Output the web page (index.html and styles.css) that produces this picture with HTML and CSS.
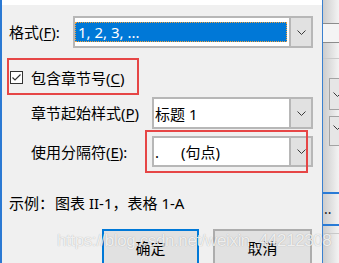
FILE: index.html
```html
<!DOCTYPE html>
<html lang="zh-CN">
<head>
<meta charset="UTF-8">
<title>题注编号</title>
<link rel="stylesheet" href="styles.css">
</head>
<body>
<div class="screen">
    <div class="dialog">
        <div class="topbar"></div>

        <div class="row row-format">
            <label class="lbl lbl-format">格式(<u>F</u>):</label>
            <div class="combo combo-wide">
                <div class="combo-value"><span class="selected">1, 2, 3, ...</span></div>
                <div class="combo-btn"><svg width="9" height="5" viewBox="0 0 9 5"><path d="M0.5 0.5 L4.5 4.5 L8.5 0.5" fill="none" stroke="#3a3a3a" stroke-width="1"/></svg></div>
            </div>
        </div>

        <div class="group">
            <span class="check"><svg width="13" height="13" viewBox="0 0 13 13"><path d="M2.5 6.5 L5 9 L10.5 3.5" fill="none" stroke="#333" stroke-width="1.2"/></svg></span>
            <span>包含章节号(<u>C</u>)</span>
        </div>

        <div class="row row-sub">
            <label class="lbl lbl-sub">章节起始样式(<u>P</u>)</label>
            <div class="combo">
                <div class="combo-value">标题 1</div>
                <div class="combo-btn"><svg width="9" height="5" viewBox="0 0 9 5"><path d="M0.5 0.5 L4.5 4.5 L8.5 0.5" fill="none" stroke="#3a3a3a" stroke-width="1"/></svg></div>
            </div>
        </div>

        <div class="row row-sub row-sep">
            <label class="lbl lbl-sub">使用分隔符(<u>E</u>):</label>
            <div class="combo combo-short">
                <div class="combo-value">.<span class="sep-name">(句点)</span></div>
                <div class="combo-btn"><svg width="9" height="5" viewBox="0 0 9 5"><path d="M0.5 0.5 L4.5 4.5 L8.5 0.5" fill="none" stroke="#3a3a3a" stroke-width="1"/></svg></div>
            </div>
            <div class="mark"></div>
        </div>

        <p class="example">示例：<span class="example-text">图表 II-1，表格 1-A</span></p>

        <div class="buttons">
            <button class="btn btn-ok">确定</button>
            <button class="btn btn-cancel">取消</button>
        </div>
    </div>

    <div class="backdrop">
        <div class="bd" style="height:23px"></div>
        <div class="bd-line"></div>
        <div class="bd-light"></div>
        <div class="bd-line"></div>
        <div class="bd" style="height:15px"></div>
        <div class="bd-line bd-line-soft"></div>
        <div class="bd" style="height:19px"></div>
        <div class="bd-combo"><svg width="9" height="5" viewBox="0 0 9 5"><path d="M0.5 0.5 L4.5 4.5 L8.5 0.5" fill="none" stroke="#3a3a3a" stroke-width="1"/></svg></div>
        <div class="bd" style="height:6px"></div>
        <div class="bd-combo bd-combo-2"><svg width="9" height="5" viewBox="0 0 9 5"><path d="M0.5 0.5 L4.5 4.5 L8.5 0.5" fill="none" stroke="#3a3a3a" stroke-width="1"/></svg></div>
        <div class="bd" style="height:46px"></div>
        <div class="bd-blue"></div>
        <div class="bd-dots">..</div>
        <div class="bd-blue"></div>
        <div class="bd" style="height:7px"></div>
        <div class="bd-line bd-line-soft"></div>
    </div>

    <div class="watermark">https://blog.csdn.net/weixin_44212308</div>
</div>
</body>
</html>
```

FILE: styles.css
```css
* {
    box-sizing: border-box;
}
body {
    margin: 0;
    background-color: #f0f0f0;
    font-family: "Noto Sans", "Noto Sans CJK SC", sans-serif;
    font-size: 15px;
    color: #000;
}
u {
    text-decoration-thickness: 1px;
    text-underline-offset: 2px;
}

.screen {
    position: relative;
    display: flex;
    height: 263px;
    overflow: hidden;
}

/* dialog */
.dialog {
    width: 322px;
    flex: none;
    border-left: 2px solid #2b79d3;
    padding: 0 9px 0 7px;
}
.topbar {
    height: 5px;
    margin: 0 -9px 0 -7px;
    background-color: #fff;
}

.row {
    position: relative;
    display: flex;
    align-items: center;
}
.row-format {
    margin-top: 11px;
}
.row-sub {
    margin-top: 2px;
    padding-left: 22px;
}
.row-sep {
    margin-top: 7px;
}
.lbl {
    flex: none;
    line-height: 20px;
}
.lbl-format {
    width: 64px;
}
.lbl-sub {
    width: 121px;
}

/* combos */
.combo {
    display: flex;
    width: 161px;
    height: 32px;
    border: 2px solid #b7b7b7;
    background-color: #fff;
}
.combo-wide {
    width: 240px;
}
.combo-short {
    height: 31px;
}
.combo-value {
    flex: 1;
    display: flex;
    align-items: center;
    padding-left: 1px;
    white-space: nowrap;
}
.combo-wide .combo-value {
    padding: 4px 2px 4px 0;
}
.selected {
    flex: 1;
    height: 100%;
    display: flex;
    align-items: center;
    padding-left: 3px;
    background-color: #0078d7;
    color: #fff;
    outline: 1px dotted #f3a23a;
    outline-offset: -1px;
}
.sep-name {
    margin-left: 22px;
}
.combo-btn {
    width: 22px;
    flex: none;
    display: flex;
    align-items: center;
    justify-content: center;
    background-color: #e1e1e1;
    border-left: 2px solid #b7b7b7;
}

/* checkbox group */
.group {
    display: flex;
    align-items: center;
    width: 132px;
    height: 37px;
    margin: 10px 0 0 -2px;
    border: 2px solid #e64646;
    padding-left: 1px;
    padding-top: 2px;
}
.check {
    display: flex;
    width: 13px;
    height: 13px;
    margin-right: 8px;
    border: 1px solid #333;
    background-color: #fff;
}
.check svg {
    margin: -1px;
}

.mark {
    position: absolute;
    left: 136px;
    top: -6px;
    width: 163px;
    height: 43px;
    border: 2px solid #e64646;
}

.example {
    margin: 26px 0 0 0;
    line-height: 20px;
    white-space: nowrap;
}
.example-text {
    margin-left: 1px;
}

/* buttons */
.buttons {
    display: flex;
    gap: 14px;
    margin-top: 16px;
    padding-left: 93px;
}
.btn {
    width: 99px;
    height: 36px;
    padding: 0;
    font-family: inherit;
    font-size: 15px;
    color: #000;
    background-color: #e1e1e1;
    border: 2px solid #adadad;
}
.btn-ok {
    width: 97px;
    border-color: #0078d7;
}

/* window behind */
.backdrop {
    flex: 1;
    display: flex;
    flex-direction: column;
    border-left: 1px solid #3a80cf;
    background: linear-gradient(to right, #cdcdcd, #f3f3f3);
}
.bd {
    flex: none;
}
.bd-line {
    height: 1px;
    background-color: #8c8c8c;
}
.bd-line-soft {
    background-color: #c9c9c9;
}
.bd-light {
    height: 18px;
    background-color: #f4f4f4;
}
.bd-combo {
    display: flex;
    align-items: center;
    height: 32px;
    margin-left: 6px;
    margin-right: -4px;
    padding-left: 3px;
    border: 1px solid #a3a3a3;
    background-color: #e6e6e6;
}
.bd-combo-2 {
    height: 30px;
    align-items: flex-start;
    padding-top: 8px;
}
.bd-blue {
    height: 2px;
    background-color: #2a7bd6;
}
.bd-dots {
    height: 30px;
    line-height: 30px;
    font-size: 14px;
    padding-left: 1px;
    color: #222;
}

.watermark {
    position: absolute;
    left: 57px;
    top: 231px;
    font-family: "Liberation Sans", sans-serif;
    font-size: 17px;
    letter-spacing: -0.4px;
    color: rgba(255, 255, 255, 0.82);
    text-shadow: 0 0 1px rgba(0, 0, 0, 0.3);
    white-space: nowrap;
}
```
